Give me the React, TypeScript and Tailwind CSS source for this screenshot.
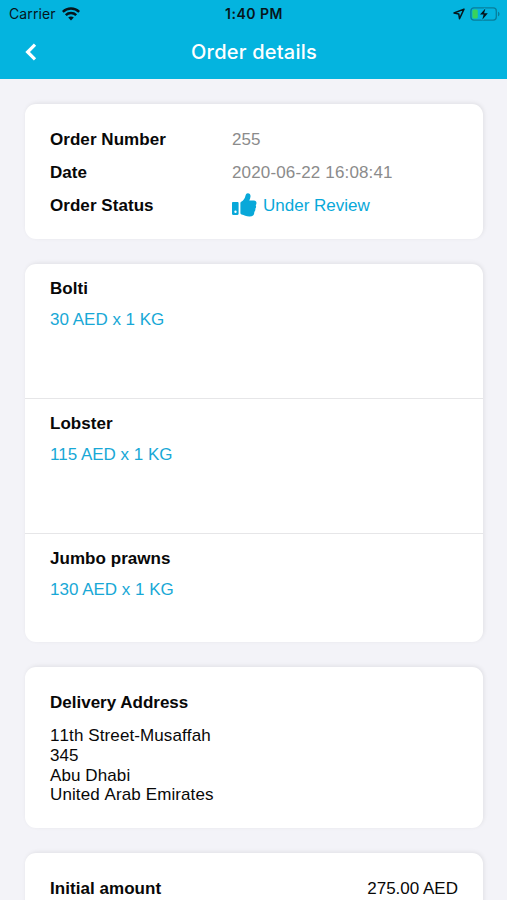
import type { ReactNode } from "react";

type OrderItem = { name: string; price: number };

const items: OrderItem[] = [
  { name: "Bolti", price: 30 },
  { name: "Lobster", price: 115 },
  { name: "Jumbo prawns", price: 130 },
];

const address = ["11th Street-Musaffah", "345", "Abu Dhabi", "United Arab Emirates"];

function WifiIcon() {
  return (
    <svg width="18" height="14" viewBox="0 0 18 14" fill="none" stroke="#06151b" strokeWidth="2.5">
      <path d="M.8 4.9C5.3.5 12.7.5 17.2 4.9" />
      <path d="M3.8 8.2c2.9-2.8 7.5-2.8 10.4 0" />
      <path d="M6.2 10.6c1.6-1.5 4-1.5 5.6 0L9 13.5Z" fill="#06151b" stroke="none" />
    </svg>
  );
}

function LocationIcon() {
  return (
    <svg width="12" height="12" viewBox="0 0 12 12" fill="none" stroke="#06151b" strokeWidth="1.5" strokeLinejoin="round">
      <path d="M11 1.1 1 5l4.8 1.1.7 4.6Z" />
    </svg>
  );
}

function BatteryIcon() {
  return (
    <svg width="31" height="14" viewBox="0 0 31 14" fill="none">
      <rect x=".9" y=".9" width="25.4" height="12.2" rx="3" stroke="#087d9b" strokeWidth="1.3" />
      <path d="M28 4.7c2 .7 2 3.9 0 4.6Z" fill="#087d9b" />
      <rect x="2.4" y="2.4" width="5.4" height="9.2" rx="1.5" fill="#39d25d" />
      <path d="M15.4 1.4 10 7.6h3.6l-1.3 5.2 5.5-6.6h-3.7Z" fill="#06151b" stroke="#04b4df" strokeWidth="1.8" paintOrder="stroke" />
    </svg>
  );
}

function ThumbIcon() {
  return (
    <svg width="25" height="25" viewBox="0.5 0.7 25 25" fill="currentColor">
      <path fillRule="evenodd" d="M1.6 9.7h4.3c.8 0 1.2.5 1.2 1.2v10.5c0 .7-.4 1.2-1.2 1.2H1.6c-.7 0-1.1-.5-1.1-1.2V10.9c0-.7.4-1.2 1.1-1.2ZM4 18.2a1.2 1.2 0 1 0 0 2.4 1.2 1.2 0 0 0 0-2.4Z" />
      <path d="M8.9 10.8c0-.6.3-1 .8-1.3 2.3-1.2 3.7-3.2 4.2-5.7.3-1.8 1-2.9 2.5-2.9 1.8 0 2.8 1.4 2.6 3.4-.1 1.4-.5 2.7-1.2 4h4.5c1.7 0 2.7 1.1 2.7 2.5 0 .9-.3 1.6-.8 2.1.7 1.2.5 2.6-.4 3.5.3 1.3-.1 2.5-1 3.2.1 3.2-1.7 4.6-4.9 4.5-3.2-.1-5.3-1.1-7.8-1.9-.8-.2-1.2-.7-1.2-1.4Z" />
    </svg>
  );
}

function Card({ className = "", children }: { className?: string; children: ReactNode }) {
  return (
    <section className={`rounded-[11px] bg-white shadow-[1px_-1px_4px_rgba(0,0,0,0.08)] ${className}`}>
      {children}
    </section>
  );
}

function Row({ label, children }: { label: string; children: ReactNode }) {
  return (
    <div className="flex h-[33px] items-center">
      <dt className="w-[182px] font-bold tracking-[0.05px]">{label}</dt>
      <dd className="flex items-center text-[#8b8b8b]">{children}</dd>
    </div>
  );
}

export default function App() {
  return (
    <div className="h-[900px] w-full overflow-hidden bg-[#f3f3f8] font-['Liberation_Sans',Arial,sans-serif] text-[17px] leading-5 text-[#080808]">
      <header className="h-[79px] bg-[#04b4df] font-['Inter',sans-serif]">
        {/* Status bar */}
        <div className="grid h-[27px] grid-cols-3 items-center pr-1.5 pl-[9px] text-[#06151b]">
          <div className="flex items-center gap-1.5 text-[14px] tracking-[0.1px]">
            Carrier
            <WifiIcon />
          </div>
          <div className="pr-[2px] text-center text-[14px] font-semibold tracking-[0.5px]">1:40 PM</div>
          <div className="flex items-center justify-end gap-[5px]">
            <LocationIcon />
            <BatteryIcon />
          </div>
        </div>

        {/* Title bar */}
        <div className="grid h-[50px] grid-cols-[1fr_auto_1fr] items-center pl-[25px] text-white">
          <button aria-label="Back" className="w-3">
            <svg width="12" height="18" viewBox="0 0 12 18" fill="none" stroke="white" strokeWidth="3.2">
              <path d="M10 1.6 2.6 9l7.4 7.4" />
            </svg>
          </button>
          <h1 className="pr-6 text-[20px] font-medium tracking-[0.22px]">Order details</h1>
        </div>
      </header>

      <main className="flex flex-col gap-[25px] pt-[25px] pr-6 pl-[25px]">
        <Card className="h-[135px] px-[25px] pt-[19px]">
          <dl>
            <Row label="Order Number">255</Row>
            <Row label="Date">
              <span className="tracking-[0.15px]">2020-06-22 16:08:41</span>
            </Row>
            <Row label="Order Status">
              <span className="flex items-center gap-1.5 text-[#08a8d9]">
                <ThumbIcon />
                Under Review
              </span>
            </Row>
          </dl>
        </Card>

        <Card className="h-[378px]">
          {items.map((item) => (
            <div key={item.name} className="h-[135px] border-b border-[#e6e6e8] px-[25px] pt-[15px] last:border-b-0">
              <h2 className="font-bold tracking-[0.05px]">{item.name}</h2>
              <p className="mt-[11px] text-[#18a8d6]">{item.price} AED x 1 KG</p>
            </div>
          ))}
        </Card>

        <Card className="h-[161px] px-[25px] pt-[26px]">
          <h2 className="font-bold">Delivery Address</h2>
          <address className="mt-[13px] leading-[19.8px] tracking-[0.1px] not-italic [font-kerning:none]">
            {address.map((line) => (
              <div key={line}>{line}</div>
            ))}
          </address>
        </Card>

        <Card className="h-[135px] px-[25px] pt-[26px]">
          <div className="flex justify-between">
            <span className="font-bold tracking-[0.05px]">Initial amount</span>
            <span>275.00 AED</span>
          </div>
        </Card>
      </main>
    </div>
  );
}
